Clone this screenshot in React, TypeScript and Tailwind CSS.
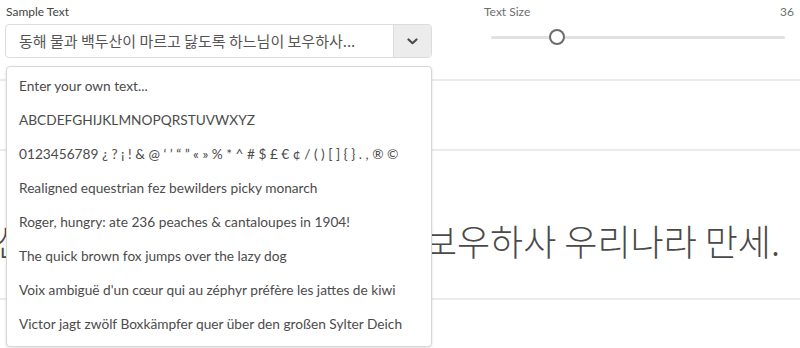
import React, { useState } from "react";

const SAMPLES = [
  "Enter your own text...",
  "ABCDEFGHIJKLMNOPQRSTUVWXYZ",
  "0123456789 ¿ ? ¡ ! & @ ‘ ’ “ ” « » % * ^ # $ £ € ¢ / ( ) [ ] { } . , ® ©",
  "Realigned equestrian fez bewilders picky monarch",
  "Roger, hungry: ate 236 peaches & cantaloupes in 1904!",
  "The quick brown fox jumps over the lazy dog",
  "Voix ambiguë d'un cœur qui au zéphyr préfère les jattes de kiwi",
  "Victor jagt zwölf Boxkämpfer quer über den großen Sylter Deich",
];

const KOREAN = "동해 물과 백두산이 마르고 닳도록 하느님이 보우하사 우리나라 만세.";

export default function App() {
  const [size] = useState(36);

  return (
    <div className="relative w-[800px] h-[348px] overflow-hidden bg-white text-[#4b4b4b] font-['Lato','Noto_Sans_CJK_KR',sans-serif]">
      {/* controls */}
      <div className="flex h-[79px] gap-[48px] px-[5px] pt-[4px]">
        <div className="w-[427px]">
          <div className="pl-px text-[12px] leading-[16px] text-[#444]">Sample Text</div>
          <div className="mt-[4px] flex h-[34px] rounded-[4px] border border-[#dcdcdc] bg-white">
            <div className="flex flex-1 items-center overflow-hidden whitespace-nowrap pl-[13px] text-[15px] text-[#555] font-['Noto_Sans_CJK_KR',sans-serif]">
              동해 물과 백두산이 마르고 닳도록 하느님이 보우하사...
            </div>
            <div className="flex w-[38px] items-center justify-center rounded-r-[4px] border-l border-[#dcdcdc] bg-[#ececec]">
              <svg width="11" height="7" viewBox="0 0 11 7">
                <path d="M1.5 1.5 L5.5 5.2 L9.5 1.5" fill="none" stroke="#4b4b4b" strokeWidth="2.2" strokeLinecap="round" strokeLinejoin="round" />
              </svg>
            </div>
          </div>
        </div>
        <div className="flex-1 pr-[1px]">
          <div className="flex justify-between pl-[4px] text-[12px] leading-[16px] text-[#6e6e6e]">
            <span>Text Size</span>
            <span>{size}</span>
          </div>
          <div className="relative mt-[9px] ml-[11px] mr-[9px] h-[16px]">
            <div className="absolute left-0 right-0 top-[7px] h-[3px] rounded bg-[#e1e1e1]" />
            <div className="absolute left-[58px] top-0 h-[16px] w-[16px] rounded-full border-2 border-[#6b6b6b] bg-white" />
          </div>
        </div>
      </div>

      {/* preview rows */}
      <div className="h-[70px] border-t-2 border-[#ebebeb]" />
      <div className="flex h-[149px] items-center justify-end overflow-hidden border-t-2 border-[#ebebeb] pr-[20px] pt-[30px]">
        <span className="whitespace-nowrap text-[36px] leading-[44px] text-[#4a4a4a] font-light font-['Noto_Sans_CJK_KR',sans-serif]">
          {KOREAN}
        </span>
      </div>
      <div className="h-[60px] border-t-2 border-[#ebebeb]" />

      {/* open dropdown */}
      <div className="absolute left-[6px] top-[66px] w-[426px] rounded-[4px] border border-[#d6d6d6] bg-white pt-[2px] pb-[5px] shadow-[0_1px_3px_rgba(0,0,0,0.12)]">
        {SAMPLES.map((s) => (
          <div key={s} className="flex h-[34px] items-center whitespace-nowrap pl-[12px] text-[13.7px]">
            {s}
          </div>
        ))}
      </div>
    </div>
  );
}
